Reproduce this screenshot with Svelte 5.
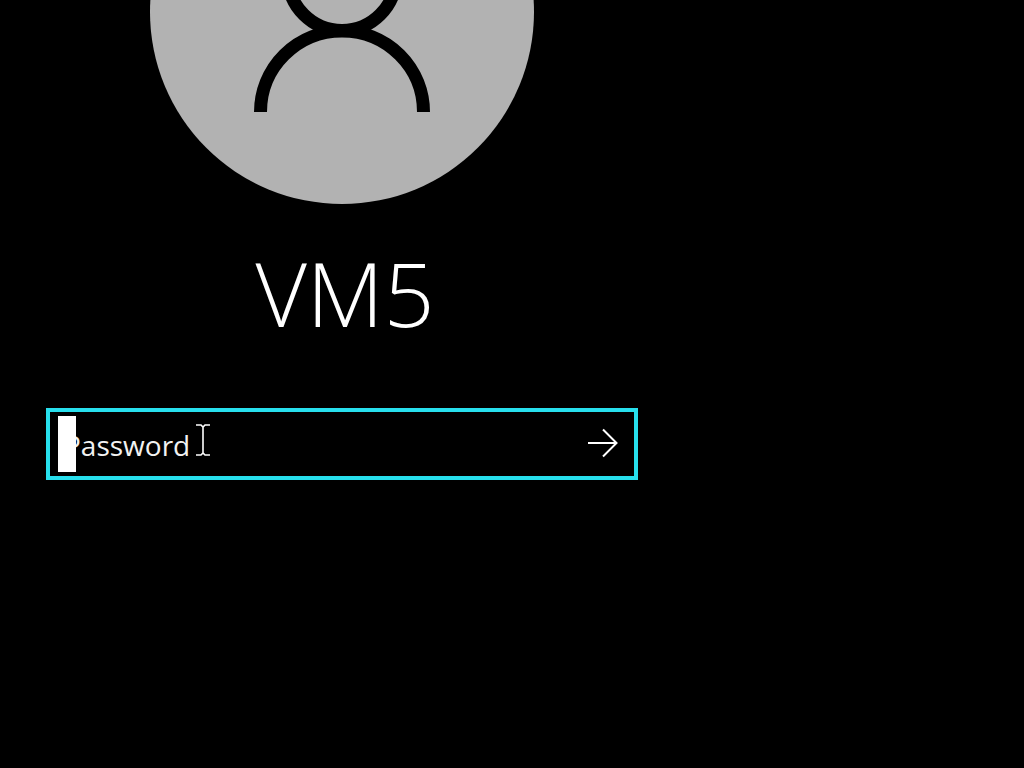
<script lang="ts">
  let userName = 'VM5';
  let password = '';

  function signIn(event: SubmitEvent) {
    event.preventDefault();
    password = '';
  }
</script>

<main class="lock-screen">
  <section class="sign-in">
    <svg class="avatar" viewBox="0 0 384 384" aria-hidden="true">
      <circle class="disc" cx="192" cy="192" r="192" />
      <circle class="figure" cx="192" cy="156.5" r="54" />
      <path class="figure" d="M110.5 292a81.5 81 0 0 1 163 0" />
    </svg>

    <h1 class="user-name">{userName}</h1>

    <form class="password-box" on:submit={signIn}>
      <input
        class="password"
        type="password"
        aria-label="Password"
        placeholder="Password"
        autocomplete="off"
        bind:value={password}
      />
      <button class="submit" type="submit" aria-label="Sign in">
        <svg width="32" height="32" viewBox="0 0 32 32" aria-hidden="true">
          <path d="M2 16H31M17 2.5L30.5 16L17 29.5" />
        </svg>
      </button>
      <span class="caret" aria-hidden="true"></span>
      <svg class="pointer" width="14" height="32" viewBox="0 0 14 32" aria-hidden="true">
        <path d="M0 1H5L7 3L9 1H14M7 3V29M0 31H5L7 29L9 31H14" />
      </svg>
    </form>
  </section>
</main>

<style>
  :global(body) {
    background: #000;
  }

  .lock-screen {
    min-height: 100vh;
    box-sizing: border-box;
    padding: 0 46px;
    overflow: hidden;
    background: #000;
    color: #fff;
    font-family: 'Open Sans', 'Noto Sans', sans-serif;
  }

  .sign-in {
    display: flex;
    flex-direction: column;
    align-items: center;
    max-width: 592px;
  }

  /* the upper half of the avatar runs off the top of the screen */
  .avatar {
    width: 384px;
    height: 384px;
    margin-top: -180px;
  }

  .disc {
    fill: #b2b2b2;
  }

  .figure {
    fill: none;
    stroke: #000;
    stroke-width: 13;
  }

  .user-name {
    margin: 29px 0 55px;
    padding-left: 6px;
    font-size: 89px;
    font-weight: 340;
    line-height: 120px;
  }

  .password-box {
    position: relative;
    display: flex;
    width: 100%;
    height: 72px;
    box-sizing: border-box;
    border: 4px solid #27dfed;
  }

  .password {
    flex: 1;
    min-width: 0;
    padding: 2px 0 0 14px;
    border: 0;
    outline: 0;
    background: transparent;
    color: #fff;
    font: 28px 'Open Sans', 'Noto Sans', sans-serif;
  }

  .password::placeholder {
    color: #f2f2f2;
    opacity: 1;
  }

  .submit {
    display: grid;
    place-items: center;
    width: 64px;
    padding: 0 0 2px;
    border: 0;
    background: transparent;
    cursor: pointer;
  }

  .submit path {
    fill: none;
    stroke: #fff;
    stroke-width: 2;
  }

  .caret {
    position: absolute;
    top: 4px;
    left: 8px;
    width: 18px;
    height: 56px;
    background: #fff;
  }

  .pointer {
    position: absolute;
    top: 12px;
    left: 146px;
    pointer-events: none;
  }

  .pointer path {
    fill: none;
    stroke: #fff;
    stroke-width: 1.6;
  }
</style>
